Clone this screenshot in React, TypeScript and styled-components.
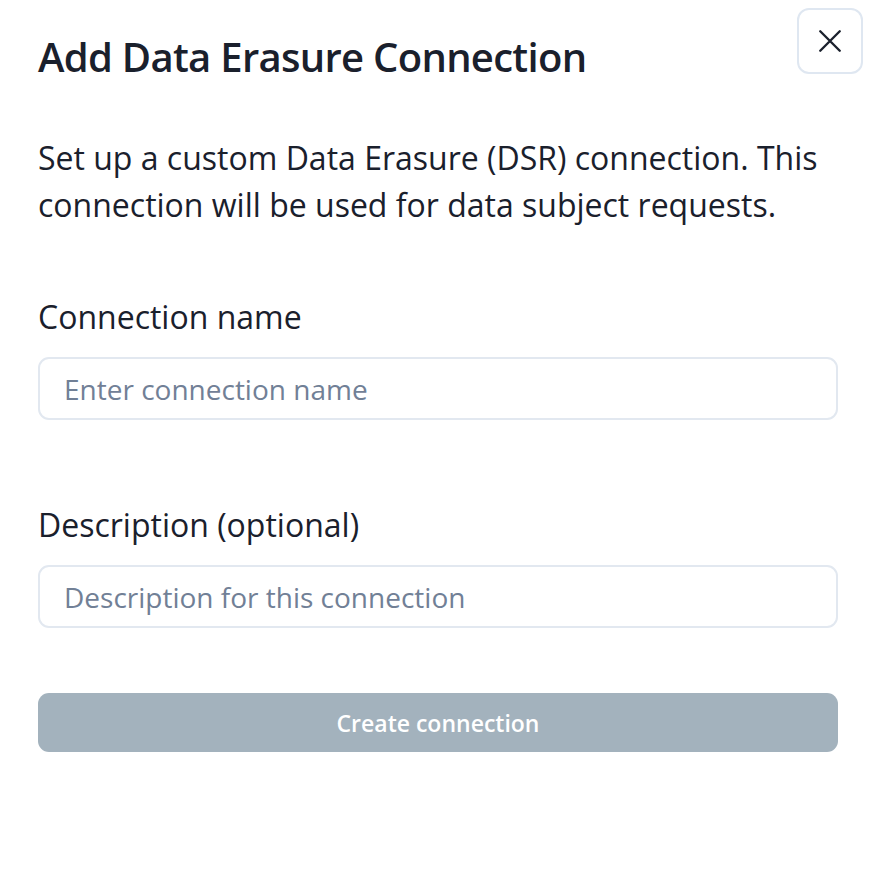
import React from "react";
import styled, { createGlobalStyle } from "styled-components";

const Global = createGlobalStyle`
  html, body { margin: 0; padding: 0; background: #ffffff; }
  body { font-family: "Open Sans", "Noto Sans", sans-serif; color: #1a202c; }
  * { box-sizing: border-box; }
`;

const Dialog = styled.div`
  position: relative;
  width: 877px;
  min-height: 875px;
  background: #ffffff;
  padding: 25px 39px 0 38px;
  display: flex;
  flex-direction: column;
`;

const Title = styled.h2`
  margin: 0;
  font-size: 40px;
  font-weight: 600;
  letter-spacing: -0.7px;
  line-height: 64px;
  color: #1a202c;
`;

const CloseButton = styled.button`
  position: absolute;
  top: 8px;
  right: 14px;
  width: 66px;
  height: 66px;
  border: 2px solid #dfe7f1;
  border-radius: 12px;
  background: #ffffff;
  display: flex;
  align-items: center;
  justify-content: center;
  padding: 0;
  cursor: pointer;
  color: #1a202c;
`;

const Body = styled.p`
  margin: 45px 0 0;
  font-size: 32px;
  line-height: 47px;
  color: #1a202c;
`;

const Form = styled.form`
  display: flex;
  flex-direction: column;
  margin-top: 67px;
`;

const Field = styled.div`
  display: flex;
  flex-direction: column;
  gap: 18px;
  margin-bottom: 83px;
  &:last-of-type { margin-bottom: 65px; }
`;

const Label = styled.label`
  font-size: 32px;
  line-height: 44px;
  color: #1a202c;
`;

const Input = styled.input`
  width: 100%;
  height: 63px;
  border: 2px solid #e2e8f0;
  border-radius: 11px;
  padding: 0 24px;
  font-family: inherit;
  font-size: 28px;
  color: #1a202c;
  background: #ffffff;
  outline: none;
  &::placeholder { color: #718096; opacity: 1; }
`;

const Submit = styled.button`
  width: 100%;
  height: 59px;
  border: none;
  border-radius: 11px;
  background: #a3b2bd;
  color: #ffffff;
  font-family: inherit;
  font-size: 23px;
  font-weight: 600;
  cursor: not-allowed;
`;

export default function App() {
  return (
    <>
      <Global />
      <Dialog>
        <Title>Add Data Erasure Connection</Title>
        <CloseButton aria-label="Close">
          <svg width="26" height="26" viewBox="0 0 24 24" fill="none" stroke="currentColor" strokeWidth="2.2" strokeLinecap="round">
            <path d="M3 3 L21 21 M21 3 L3 21" />
          </svg>
        </CloseButton>
        <Body>
          Set up a custom Data Erasure (DSR) connection. This connection will be used for data subject requests.
        </Body>
        <Form onSubmit={(e) => e.preventDefault()}>
          <Field>
            <Label htmlFor="name">Connection name</Label>
            <Input id="name" placeholder="Enter connection name" />
          </Field>
          <Field>
            <Label htmlFor="desc">Description (optional)</Label>
            <Input id="desc" placeholder="Description for this connection" />
          </Field>
          <Submit type="submit" disabled>Create connection</Submit>
        </Form>
      </Dialog>
    </>
  );
}
